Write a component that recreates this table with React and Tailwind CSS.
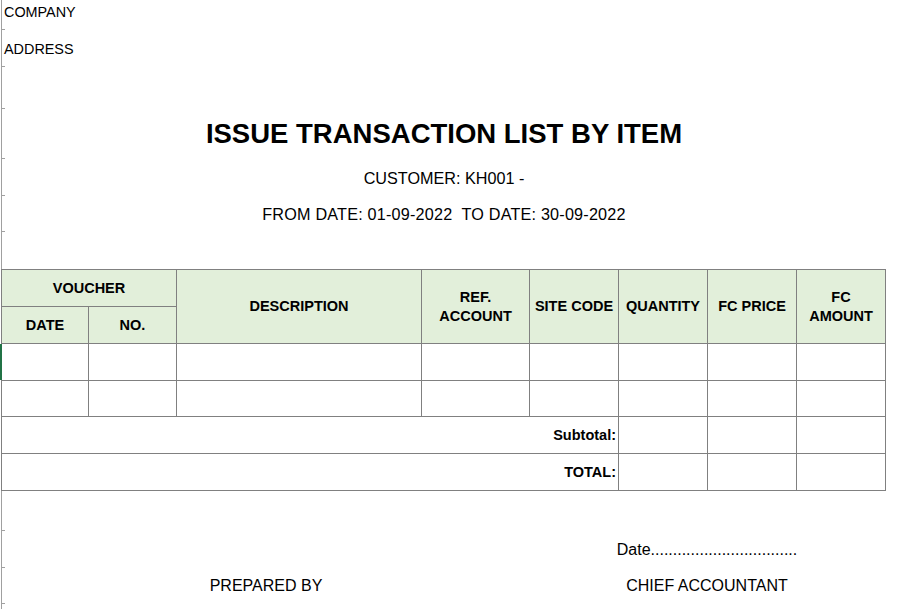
import React from "react";

const Tick = () => (
  <div className="absolute left-0 bottom-0 w-[3px] h-px bg-[#a0a0a0]" />
);

function Row({ h, className = "", tick = true, children }) {
  return (
    <div
      className={`relative ml-px border-l border-[#a0a0a0] ${className}`}
      style={{ height: h }}
    >
      {children}
      {tick && <Tick />}
    </div>
  );
}

const hd =
  "bg-[#e2efda] flex items-center justify-center text-center font-bold text-[14.5px] leading-[19px] text-black";
const cell = "bg-white";

export default function App() {
  const dots = ".".repeat(33);
  return (
    <div className="relative w-[920px] h-[609px] bg-white overflow-hidden font-['Liberation_Sans',Arial,sans-serif] text-black">
      <div className="flex flex-col">
        <Row h={30} className="flex items-end pb-[10px] pl-[2px]">
          <span className="text-[14.4px] leading-[16px]">COMPANY</span>
        </Row>
        <Row h={37} className="flex items-end pb-[10px] pl-[2px]">
          <span className="text-[14.4px] leading-[16px]">ADDRESS</span>
        </Row>
        <Row h={42} />
        <Row h={50} className="flex items-center">
          <div className="w-[884px] text-center font-bold text-[27.5px] leading-[32px]">
            ISSUE TRANSACTION LIST BY ITEM
          </div>
        </Row>
        <Row h={37} className="flex items-center">
          <div className="w-[884px] text-center text-[16.2px] leading-[18px]">
            CUSTOMER: KH001 -
          </div>
        </Row>
        <Row h={36} className="flex items-center">
          <div className="w-[884px] text-center text-[16.2px] leading-[18px] whitespace-pre tracking-[0.2px]">
            {"FROM DATE: 01-09-2022  TO DATE: 30-09-2022"}
          </div>
        </Row>
        <Row h={37} tick={false} />

        {/* Table */}
        <div className="ml-px w-[885px] bg-[#808080] p-px grid gap-px grid-cols-[86px_87px_244px_107px_88px_88px_88px_88px] grid-rows-[36px_36px_36px_35px_36px_36px]">
          <div className={`${hd} col-span-2`}>VOUCHER</div>
          <div className={`${hd} row-span-2`}>DESCRIPTION</div>
          <div className={`${hd} row-span-2`}>
            REF.
            <br />
            ACCOUNT
          </div>
          <div className={`${hd} row-span-2 whitespace-nowrap`}>SITE CODE</div>
          <div className={`${hd} row-span-2`}>QUANTITY</div>
          <div className={`${hd} row-span-2`}>FC PRICE</div>
          <div className={`${hd} row-span-2`}>
            FC
            <br />
            AMOUNT
          </div>
          <div className={hd}>DATE</div>
          <div className={hd}>NO.</div>

          <div className={`${cell} relative`}>
            <div className="absolute -left-[2px] top-0 bottom-0 w-[2px] bg-[#217346]" />
          </div>
          {Array.from({ length: 7 }).map((_, i) => (
            <div key={"a" + i} className={cell} />
          ))}
          {Array.from({ length: 8 }).map((_, i) => (
            <div key={"b" + i} className={cell} />
          ))}

          <div className="bg-white col-span-5 flex items-center justify-end pr-[2px] font-bold text-[14.5px] leading-[17px]">
            Subtotal:
          </div>
          {Array.from({ length: 3 }).map((_, i) => (
            <div key={"c" + i} className={cell} />
          ))}
          <div className="bg-white col-span-5 flex items-center justify-end pr-[2px] font-bold text-[14.5px] leading-[17px]">
            TOTAL:
          </div>
          {Array.from({ length: 3 }).map((_, i) => (
            <div key={"d" + i} className={cell} />
          ))}
        </div>

        <Row h={40} />
        <Row h={37} className="flex items-center">
          <div className="w-[528px]" />
          <div className="w-[88px]" />
          <div className="w-[178px] flex justify-center">
            <span className="whitespace-nowrap text-[16px] leading-[18px]">
              Date{dots}
            </span>
          </div>
        </Row>
        <Row h={36} className="flex items-center">
          <div className="w-[528px] flex justify-center">
            <span className="whitespace-nowrap text-[16px] leading-[18px]">
              PREPARED BY
            </span>
          </div>
          <div className="w-[88px]" />
          <div className="w-[178px] flex justify-center">
            <span className="whitespace-nowrap text-[16px] leading-[18px]">
              CHIEF ACCOUNTANT
            </span>
          </div>
        </Row>
        <Row h={40} tick={false} />
      </div>
    </div>
  );
}
